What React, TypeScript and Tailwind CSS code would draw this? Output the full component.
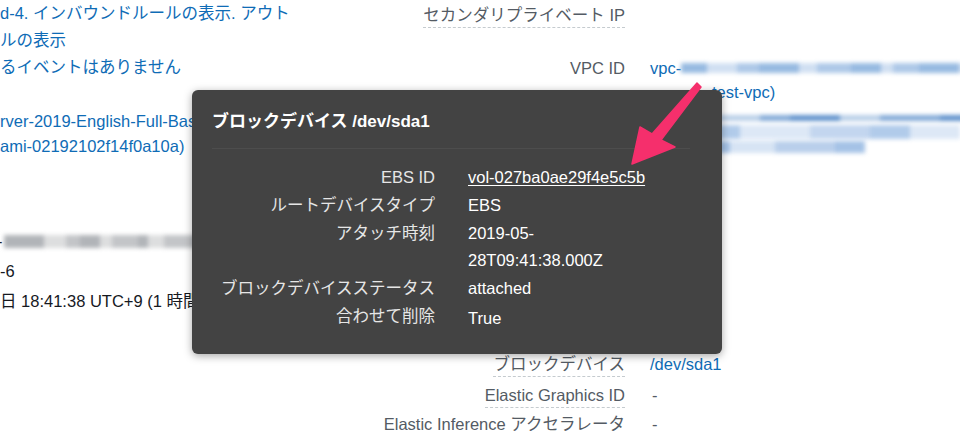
import React from "react";

const font = {
  fontFamily: '"Liberation Sans", "Noto Sans CJK JP", sans-serif',
};

function Blur({ blocks, color, h = "h-[11px]" }: { blocks: number[]; color: string; h?: string }) {
  return (
    <span className="inline-flex items-center align-middle blur-[2px]">
      {blocks.map((w, i) => (
        <span
          key={i}
          className={`inline-block ${h} ${i % 3 === 1 ? "opacity-40" : i % 3 === 2 ? "opacity-70" : "opacity-90"} ${color}`}
          style={{ width: w }}
        />
      ))}
    </span>
  );
}

function Label({ children, dashed = true }: { children: React.ReactNode; dashed?: boolean }) {
  return (
    <div className="w-[265px] shrink-0 flex justify-end">
      <span className={`text-[#545b64] ${dashed ? "border-b border-dashed border-[#c5cbcf]" : ""}`}>
        {children}
      </span>
    </div>
  );
}

function TipRow({ label, children }: { label: string; children: React.ReactNode }) {
  return (
    <div className="flex">
      <div className="w-[223px] shrink-0 text-right text-[#e6e6e6]">{label}</div>
      <div className="ml-[33px] text-white">{children}</div>
    </div>
  );
}

export default function App() {
  return (
    <div
      className="relative w-[960px] h-[431px] overflow-hidden bg-white text-[16.5px]"
      style={font}
    >
      <div className="flex">
        {/* left column */}
        <div className="w-[360px] shrink-0 overflow-hidden whitespace-nowrap text-[#0f6cb6]">
          <div className="leading-[27px]">
            <div>d-4. インバウンドルールの表示. アウト</div>
            <div>ルの表示</div>
            <div>るイベントはありません</div>
          </div>
          <div className="mt-[28px] leading-[25px]">
            <div className="w-[192px] overflow-hidden">rver-2019-English-Full-Base-2019.05.15</div>
            <div>ami-02192102f14f0a10a)</div>
          </div>
          <div className="mt-[67px] leading-[30px] text-[#16191f]">
            <div className="flex items-center w-[192px] overflow-hidden">
              <span className="-ml-[3px] mr-[1px]">-</span>
              <Blur
                h="h-[13px]"
                color="bg-[#a9acb0]"
                blocks={[40, 22, 14, 20, 12, 26, 10, 16, 30, 20, 24]}
              />
            </div>
            <div>-6</div>
            <div className="w-[192px] overflow-hidden">日 18:41:38 UTC+9 (1 時間前)</div>
          </div>
        </div>

        {/* right column */}
        <div className="flex-1 pt-[3px] leading-[24px] whitespace-nowrap">
          <div className="flex">
            <Label>セカンダリプライベート IP</Label>
          </div>
          <div className="flex mt-[28px]">
            <Label>VPC ID</Label>
            <div className="ml-[25px] text-[#0f6cb6]">
              <div className="flex items-center">
                vpc-
                <Blur
                  h="h-[10px]"
                  color="bg-[#8cb2de]"
                  blocks={[26, 30, 22, 40, 18, 34, 30, 12, 26, 40, 22]}
                />
              </div>
              <div className="pl-[62px]">test-vpc)</div>
            </div>
          </div>
          <div className="flex mt-[6px]">
            <Label dashed={false}>サブネット ID</Label>
            <div className="ml-[25px] leading-[12px]">
              <Blur h="h-[6px]" color="bg-[#4f86c6]" blocks={[60, 50, 30, 50, 40, 60, 30, 40, 50]} />
              <div className="mt-[2px]">
                <Blur h="h-[14px]" color="bg-[#a9c5e8]" blocks={[90, 70, 60, 40, 50]} />
              </div>
              <div className="mt-[1px]">
                <Blur h="h-[12px]" color="bg-[#9bbbe3]" blocks={[80, 45, 60, 30]} />
              </div>
            </div>
          </div>

          <div className="flex mt-[199px]">
            <Label>ブロックデバイス</Label>
            <div className="ml-[25px] text-[#0f6cb6]">/dev/sda1</div>
          </div>
          <div className="flex mt-[6px]">
            <Label>Elastic Graphics ID</Label>
            <div className="ml-[27px] text-[#545b64]">-</div>
          </div>
          <div className="flex mt-[4px]">
            <Label dashed={false}>Elastic Inference アクセラレータ</Label>
            <div className="ml-[27px] text-[#545b64]">-</div>
          </div>
        </div>
      </div>

      {/* popover */}
      <div className="absolute left-[192px] top-[90px] w-[530px] h-[264px] rounded-[6px] bg-[#434343] shadow-[0_2px_8px_rgba(0,0,0,0.35)] pl-[20px] pr-[32px] pt-[20px] whitespace-nowrap">
        <div className="text-[17px] font-bold leading-[24px] text-white">
          ブロックデバイス /dev/sda1
        </div>
        <div className="mt-[14px] h-px bg-[#2f2f2f] border-b border-[#4d4d4d]" />
        <div className="mt-[14px] leading-[28px]">
          <TipRow label="EBS ID">
            <span className="underline underline-offset-2">vol-027ba0ae29f4e5c5b</span>
          </TipRow>
          <TipRow label="ルートデバイスタイプ">EBS</TipRow>
          <TipRow label="アタッチ時刻">
            <div>2019-05-</div>
            <div className="-mt-px">28T09:41:38.000Z</div>
          </TipRow>
          <TipRow label="ブロックデバイスステータス">attached</TipRow>
          <TipRow label="合わせて削除">
            <div className="mt-[2px]">True</div>
          </TipRow>
        </div>
      </div>

      {/* annotation arrow */}
      <svg
        className="absolute left-0 top-0 pointer-events-none"
        width="960"
        height="431"
        viewBox="0 0 960 431"
      >
        <polygon
          points="697,83 701,87 661,140 675,147 632,164 640,127 652,134"
          fill="#f52f6c"
          stroke="#f52f6c"
          strokeWidth="1.5"
          strokeLinejoin="round"
        />
      </svg>
    </div>
  );
}
